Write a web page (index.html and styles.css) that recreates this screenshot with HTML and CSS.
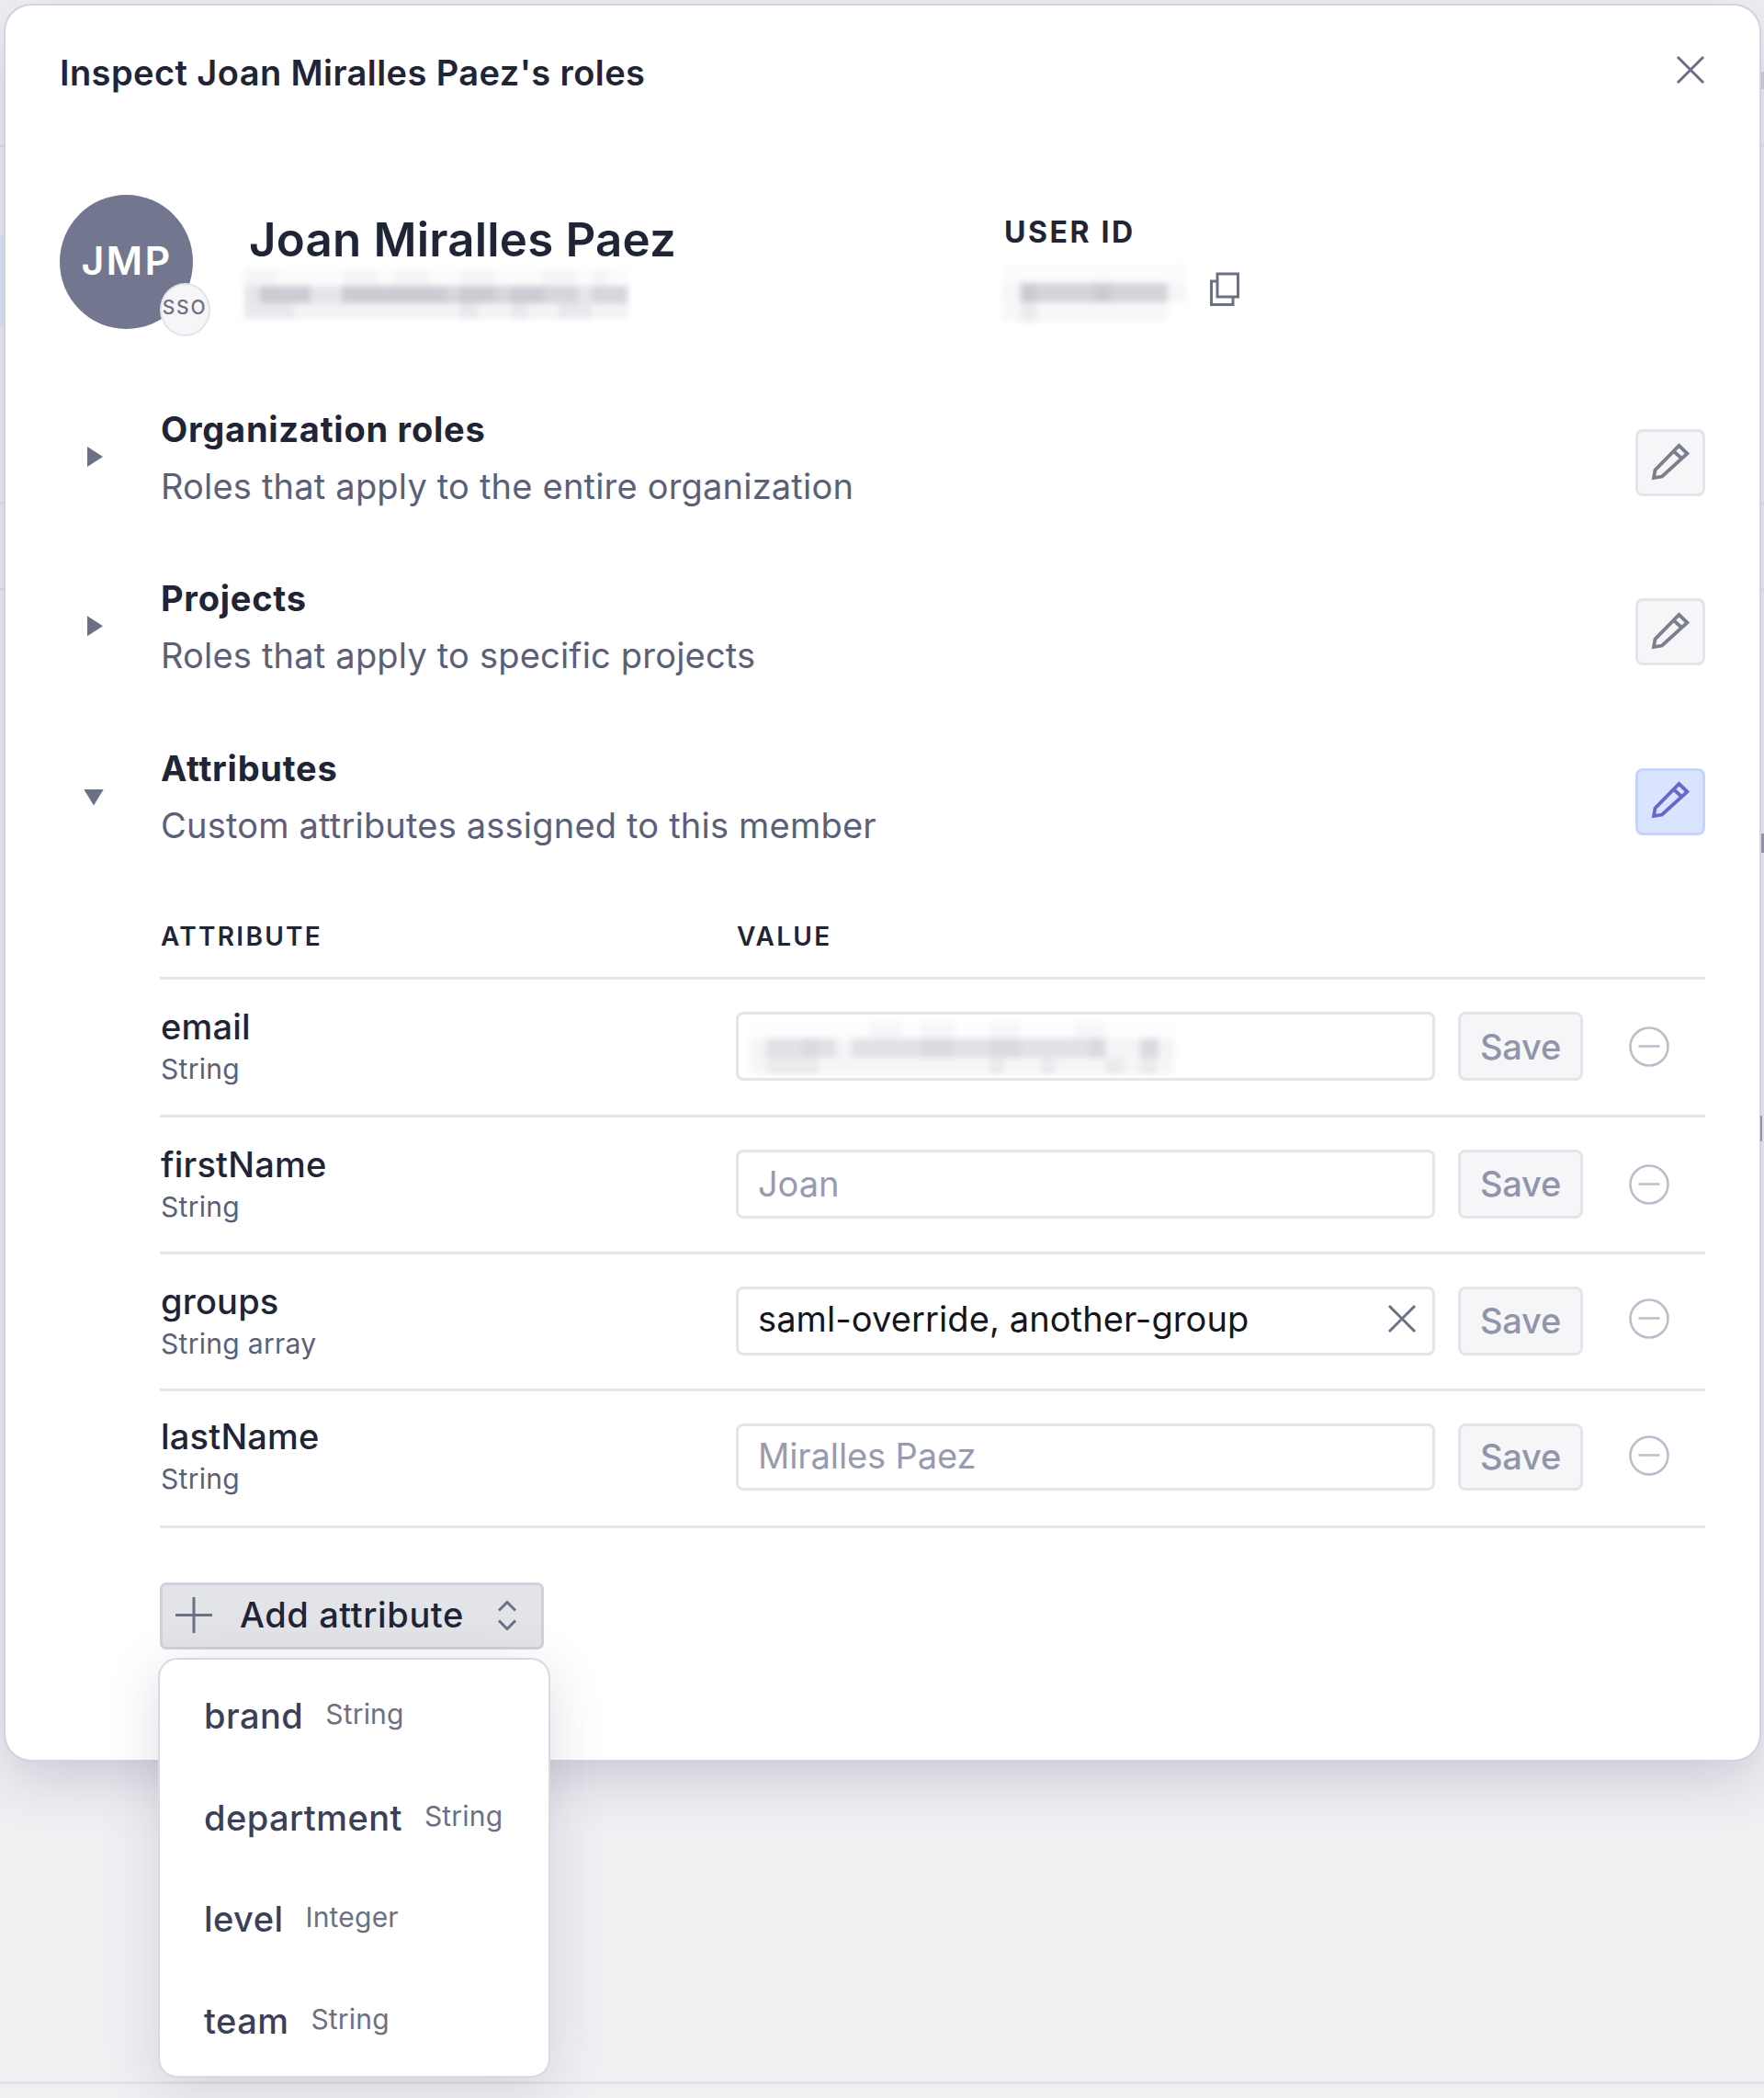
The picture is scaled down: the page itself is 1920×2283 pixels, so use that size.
FILE: index.html
```html
<!DOCTYPE html>
<html lang="en">
<head>
    <meta charset="UTF-8">
    <meta name="viewport" content="width=device-width, initial-scale=1.0">
    <title>Inspect roles</title>
    <link rel="stylesheet" href="styles.css">
</head>
<body>
    <svg class="icon-defs" width="0" height="0">
        <symbol id="icon-close" viewBox="0 0 32 32"><path d="M2 2l28 28M30 2L2 30"/></symbol>
        <symbol id="icon-pencil" viewBox="0 0 42 42"><path d="M3 39l1.500-8.500L30.500 4l9 8.500L12 37.500zM24.500 9.800l9.500 8.700"/></symbol>
        <symbol id="icon-remove" viewBox="0 0 44 44"><circle cx="22" cy="22" r="20.500"/><path d="M10.500 21.500h23"/></symbol>
    </svg>

    <!-- page behind the dialog -->
    <div class="backdrop">
        <i class="row-active"></i>
        <i class="line l1"></i>
        <i class="line l2"></i>
        <i class="line l3"></i>
        <i class="line l4"></i>
        <i class="mark m1"></i>
        <i class="mark m2"></i>
        <i class="mark m3"></i>
    </div>

    <div class="modal">
        <div class="modal-header">
            <h1>Inspect Joan Miralles Paez's roles</h1>
            <svg class="icon close"><use href="#icon-close"/></svg>
        </div>

        <div class="profile">
            <div class="avatar"><span class="initials">JMP</span><span class="sso">SSO</span></div>
            <div class="member">
                <h2>Joan Miralles Paez</h2>
                <svg class="redacted" width="418" height="54">
                    <rect width="418" height="18" fill="#fcfcfd"/>
                    <g fill="#f4f5f7"><rect width="36" height="18"/><rect x="108" width="36" height="18"/><rect x="162" width="38" height="18"/><rect x="234" width="38" height="18"/><rect x="324" width="36" height="18"/><rect x="378" width="18" height="18"/></g>
                    <rect y="18" width="418" height="19" fill="#e5e6ea"/>
                    <g fill="#cccdd4"><rect x="17" y="18" width="55" height="19"/><rect x="106" y="18" width="114" height="19"/><rect x="234" y="18" width="38" height="19"/><rect x="290" y="18" width="36" height="19"/></g>
                    <g fill="#d6d7dd"><rect x="220" y="18" width="14" height="19"/><rect x="272" y="18" width="18" height="19"/><rect x="326" y="18" width="38" height="19"/><rect x="378" y="18" width="38" height="19"/></g>
                    <rect y="37" width="418" height="17" fill="#f2f3f5"/>
                    <g fill="#e8e9ed"><rect y="37" width="54" height="17"/><rect x="234" y="37" width="20" height="17"/><rect x="290" y="37" width="18" height="17"/><rect x="342" y="37" width="36" height="17"/></g>
                </svg>
            </div>
            <div class="user-id">
                <h3>USER ID</h3>
                <div class="user-id-value">
                    <svg class="redacted" width="200" height="62">
                        <rect width="200" height="20" fill="#fbfbfc"/>
                        <rect y="20" width="200" height="21" fill="#f5f6f7"/>
                        <rect x="20" y="20" width="160" height="21" fill="#d4d5da"/>
                        <rect x="100" y="20" width="18" height="21" fill="#cbccd2"/>
                        <rect x="20" y="20" width="16" height="21" fill="#cbccd2"/>
                        <rect y="41" width="180" height="21" fill="#f8f8f9"/>
                        <rect x="20" y="41" width="18" height="21" fill="#eaebed"/>
                    </svg>
                    <svg class="icon copy" viewBox="0 0 34 38"><path d="M9 2h22.500v25H9zM8 10H2.500v25.500H26V28"/></svg>
                </div>
            </div>
        </div>

        <div class="section">
            <i class="caret"></i>
            <div class="section-text">
                <h4>Organization roles</h4>
                <p>Roles that apply to the entire organization</p>
            </div>
            <button class="edit"><svg class="icon"><use href="#icon-pencil"/></svg></button>
        </div>
        <div class="section">
            <i class="caret"></i>
            <div class="section-text">
                <h4>Projects</h4>
                <p>Roles that apply to specific projects</p>
            </div>
            <button class="edit"><svg class="icon"><use href="#icon-pencil"/></svg></button>
        </div>
        <div class="section">
            <i class="caret open"></i>
            <div class="section-text">
                <h4>Attributes</h4>
                <p>Custom attributes assigned to this member</p>
            </div>
            <button class="edit active"><svg class="icon"><use href="#icon-pencil"/></svg></button>
        </div>

        <div class="attributes">
            <div class="attr-head">
                <span class="col">ATTRIBUTE</span><span>VALUE</span>
            </div>
            <div class="attr-row">
                <div class="col">
                    <div class="attr-name">email</div>
                    <div class="attr-type">String</div>
                </div>
                <div class="field">
                    <svg class="redacted" width="461" height="57">
                        <rect width="461" height="18" fill="#fdfdfe"/>
                        <g fill="#f7f7f9"><rect x="130" width="34" height="18"/><rect x="185" width="38" height="18"/><rect x="260" width="34" height="18"/><rect x="352" width="34" height="18"/></g>
                        <rect y="18" width="461" height="21" fill="#f3f4f6"/>
                        <g fill="#e1e2e7"><rect x="17" y="18" width="76" height="21"/><rect x="110" y="18" width="276" height="21"/></g>
                        <g fill="#dadbe1"><rect x="56" y="18" width="18" height="21"/><rect x="185" y="18" width="36" height="21"/><rect x="260" y="18" width="34" height="21"/><rect x="368" y="18" width="18" height="21"/><rect x="424" y="18" width="20" height="21"/></g>
                        <rect y="39" width="461" height="18" fill="#f5f6f7"/>
                        <g fill="#ebebee"><rect x="17" y="39" width="57" height="18"/><rect x="260" y="39" width="16" height="18"/><rect x="316" y="39" width="16" height="18"/><rect x="386" y="39" width="20" height="18"/><rect x="424" y="39" width="18" height="18"/></g>
                    </svg>
                </div>
                <button class="save">Save</button>
                <svg class="icon remove"><use href="#icon-remove"/></svg>
            </div>
            <div class="attr-row">
                <div class="col">
                    <div class="attr-name">firstName</div>
                    <div class="attr-type">String</div>
                </div>
                <div class="field">Joan</div>
                <button class="save">Save</button>
                <svg class="icon remove"><use href="#icon-remove"/></svg>
            </div>
            <div class="attr-row editable">
                <div class="col">
                    <div class="attr-name">groups</div>
                    <div class="attr-type">String array</div>
                </div>
                <div class="field">saml-override, another-group<svg class="icon clear"><use href="#icon-close"/></svg></div>
                <button class="save">Save</button>
                <svg class="icon remove"><use href="#icon-remove"/></svg>
            </div>
            <div class="attr-row last">
                <div class="col">
                    <div class="attr-name">lastName</div>
                    <div class="attr-type">String</div>
                </div>
                <div class="field">Miralles Paez</div>
                <button class="save">Save</button>
                <svg class="icon remove"><use href="#icon-remove"/></svg>
            </div>

            <div class="add">
                <button class="add-button">
                    <svg class="icon plus" viewBox="0 0 40 40"><path d="M0 20.500h40M20 1v39"/></svg>
                    Add attribute
                    <svg class="icon sort" viewBox="0 0 22 34"><path d="M2 12.500l9-9 9 9M2 23.500l9 9 9-9"/></svg>
                </button>
                <div class="menu">
                    <div class="menu-item"><b>brand</b><small>String</small></div>
                    <div class="menu-item"><b>department</b><small>String</small></div>
                    <div class="menu-item"><b>level</b><small>Integer</small></div>
                    <div class="menu-item"><b>team</b><small>String</small></div>
                </div>
            </div>
        </div>
    </div>
</body>
</html>
```
FILE: styles.css
```css
* {
    box-sizing: border-box;
}

body {
    margin: 0;
    position: relative;
    height: 2283px;
    overflow: hidden;
    background-color: #f0f0f3;
    font-family: Inter, sans-serif;
    font-size: 38px;
    color: #1f2437;
}

h1, h2, h3, h4, p {
    margin: 0;
}

button {
    font-family: inherit;
    padding: 0;
}

.icon-defs {
    position: absolute;
}

.icon {
    display: block;
    flex: none;
    fill: none;
    stroke: #6c7084;
    stroke-width: 3;
}

/* page behind the dialog */
.backdrop i {
    position: absolute;
}

.line {
    left: 0;
    width: 100%;
    height: 3px;
    background-color: #e2e2e6;
}

.l1 { top: 157px; }
.l2 { top: 546px; }
.l3 { top: 640px; }
.l4 { top: 2265px; }

.row-active {
    left: 0;
    top: 256px;
    width: 6px;
    height: 102px;
    background-color: #e0e8f8;
}

.backdrop .mark {
    left: 1917px;
    width: 3px;
    z-index: 2;
    background-color: #8f92a6;
}

.backdrop .m1 { top: 78px; height: 19px; background-color: #c2c3ce; }
.backdrop .m2 { top: 907px; height: 21px; }
.backdrop .m3 { top: 1214px; height: 28px; left: 1916px; width: 2px; }

.modal {
    position: relative;
    width: 1909px;
    height: 1909px;
    margin: 6px 0 0 6px;
    padding: 0 59px;
    border-radius: 28px;
    background-color: #fff;
    box-shadow: 0 0 0 2px #d3d3de, 0 20px 60px rgba(80, 80, 120, 0.24);
}

.modal-header {
    display: flex;
    align-items: center;
    justify-content: space-between;
    height: 140px;
}

h1 {
    padding-top: 5px;
    font-size: 38px;
    font-weight: 600;
    letter-spacing: 0.42px;
}

.close {
    width: 32px;
    height: 32px;
}

.profile {
    display: flex;
    height: 146px;
    margin-top: 66px;
}

.avatar {
    position: relative;
    display: flex;
    align-items: center;
    justify-content: center;
    width: 145px;
    height: 146px;
    border-radius: 50%;
    background-color: #72768f;
    color: #fff;
    font-size: 43px;
    font-weight: 600;
    letter-spacing: 2.3px;
}

.initials {
    margin: -5px 0 0 1px;
}

.sso {
    position: absolute;
    left: 109px;
    top: 96px;
    display: flex;
    align-items: center;
    justify-content: center;
    width: 55px;
    height: 58px;
    padding: 0 1px 6px 0;
    border: 2px solid #e3e4ea;
    border-radius: 50%;
    background-color: #f6f6f8;
    color: #6c7084;
    font-size: 21px;
    font-weight: 500;
    letter-spacing: 1.8px;
}

.member {
    width: 825px;
    padding: 19px 0 0 56px;
}

h2 {
    padding-left: 5px;
    font-size: 51px;
    font-weight: 600;
    line-height: 60px;
    letter-spacing: 0.2px;
    white-space: nowrap;
}

.redacted {
    display: block;
    filter: blur(3px);
}

.member .redacted {
    margin-top: 2px;
}

.user-id {
    padding: 21px 0 0 56px;
}

h3 {
    padding-left: 2px;
    font-size: 32px;
    font-weight: 700;
    line-height: 40px;
    letter-spacing: 2.6px;
}

.user-id-value {
    display: flex;
    gap: 25px;
    padding-top: 15px;
}

.copy {
    width: 34px;
    height: 38px;
    margin-top: 8px;
}

/* collapsible sections */
.section {
    display: flex;
    height: 184.3px;
}

.profile + .section {
    margin-top: 84px;
}

.caret {
    width: 17px;
    height: 22px;
    margin: 44px 63px 0 30px;
    background-color: #6c7084;
    clip-path: polygon(0 0, 100% 50%, 0 100%);
}

.caret.open {
    width: 22px;
    height: 18px;
    margin: 48px 62px 0 26px;
    clip-path: polygon(0 0, 100% 0, 50% 100%);
}

.section-text {
    flex: 1;
    line-height: 50px;
}

h4 {
    font-size: 38px;
    font-weight: 700;
    letter-spacing: 0.75px;
}

.section p {
    margin-top: 12px;
    color: #5b607a;
    letter-spacing: 0.2px;
}

.edit {
    display: flex;
    align-items: center;
    justify-content: center;
    width: 76px;
    height: 73px;
    margin-top: 25px;
    padding-bottom: 4px;
    border: 3px solid #e4e5ea;
    border-radius: 8px;
    background-color: #f6f6f8;
}

.edit .icon {
    width: 42px;
    height: 42px;
    stroke: #7b7e8c;
    stroke-width: 3.8;
}

.edit.active {
    border-color: #c5d3fd;
    background-color: #dbe4ff;
}

.edit.active .icon {
    stroke: #6b66cb;
}

/* attributes table */
.attributes {
    margin-left: 109px;
}

.attr-head {
    display: flex;
    height: 71.6px;
    border-bottom: 3px solid #e4e5ea;
    font-size: 28px;
    font-weight: 600;
    line-height: 48px;
    letter-spacing: 2.3px;
}

.col {
    width: 627px;
    padding-left: 1px;
}

.attr-head .col {
    width: 628px;
}

.attr-row {
    display: flex;
    height: 149.1px;
    border-bottom: 3px solid #e4e5ea;
}

.attr-name {
    margin-top: 29px;
    font-weight: 500;
    line-height: 44px;
    letter-spacing: 0.2px;
}

.attr-type {
    margin-top: 6px;
    font-size: 30px;
    line-height: 36px;
    letter-spacing: 0.3px;
    color: #5b607a;
}

.field {
    display: flex;
    align-items: center;
    justify-content: space-between;
    width: 761px;
    height: 75px;
    margin: 35px 25px 0 0;
    padding: 0 17px 0 21px;
    border: 3px solid #e4e5ea;
    border-radius: 8px;
    color: #979bb1;
    letter-spacing: -0.1px;
}

.field .redacted {
    margin: 3px 0 0 -8px;
}

.save {
    width: 136px;
    height: 75px;
    margin: 35px 50px 0 0;
    border: 3px solid #e4e5ea;
    border-radius: 8px;
    background-color: #f6f6f8;
    color: #9195ab;
    font-size: 38px;
    font-weight: 500;
    letter-spacing: -0.2px;
}

.remove {
    width: 44px;
    height: 44px;
    margin-top: 51px;
    stroke: #babdca;
    stroke-width: 2.5;
}

.editable .field {
    padding-bottom: 4px;
    color: #14161d;
    letter-spacing: 0.1px;
}

.clear {
    width: 32px;
    height: 32px;
}

.editable .remove,
.last .remove {
    margin-top: 48px;
}

.last .attr-name {
    margin-top: 27px;
}

.last .field,
.last .save {
    height: 73px;
}

.last .field {
    padding-bottom: 2px;
}

/* add attribute */
.add {
    position: relative;
    margin-top: 59px;
}

.add-button {
    display: flex;
    align-items: center;
    width: 418px;
    height: 73px;
    padding: 0 26px 2px 14px;
    border: 3px solid #d0d1d9;
    border-radius: 7px;
    background-color: #e3e4e8;
    color: #1f2437;
    font-size: 38px;
    font-weight: 500;
    letter-spacing: 0.6px;
}

.plus {
    width: 40px;
    height: 40px;
    margin-right: 30px;
}

.sort {
    width: 22px;
    height: 34px;
    margin-left: auto;
}

.menu {
    position: absolute;
    left: 0;
    top: 84px;
    width: 423px;
    height: 453px;
    padding: 6px 0 0 48px;
    border-radius: 19px;
    background-color: #fff;
    box-shadow: 0 0 0 2px #d9d9e3, 0 12px 60px rgba(80, 80, 120, 0.2);
}

.menu-item {
    display: flex;
    align-items: center;
    gap: 24px;
    height: 110.5px;
    color: #3a4059;
}

.menu-item b {
    font-weight: 500;
    letter-spacing: 0.45px;
}

.menu-item small {
    padding-bottom: 4px;
    font-size: 30px;
    letter-spacing: 0.2px;
    color: #6c7084;
}
```
